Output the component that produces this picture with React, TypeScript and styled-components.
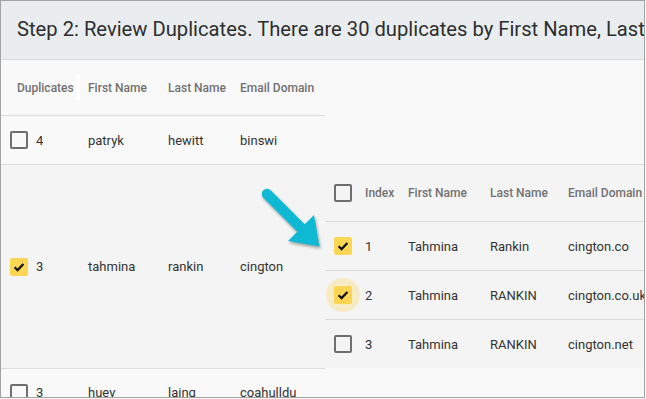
import React from "react";
import styled, { createGlobalStyle } from "styled-components";

const GlobalStyle = createGlobalStyle`
  html, body { margin: 0; padding: 0; background: #ffffff; }
  body { font-family: Roboto, "Liberation Sans", Arial, sans-serif; }
  * { box-sizing: border-box; }
`;

const Frame = styled.div`
  position: relative;
  width: 645px;
  height: 398px;
  border: 1px solid #a3a3a3;
  background: #f9f9f9;
  overflow: hidden;
`;

const TitleBar = styled.div`
  height: 59px;
  display: flex;
  align-items: center;
  padding: 0 0 3px 16px;
  background: #e9edf0;
  border-bottom: 1px solid #d9dcdf;
  font-size: 20.2px;
  color: #2e2e2e;
  white-space: nowrap;
  overflow: hidden;
`;

const Body = styled.div`
  display: flex;
  flex-direction: column;
`;

const OuterGrid = styled.div<{ $border?: "top" | "bottom" | "none" }>`
  width: 324px;
  display: grid;
  grid-template-columns: 79px 80px 72px 93px;
  ${(p) => (p.$border === "bottom" ? "border-bottom: 1px solid #dcdcdc;" : "")}
  ${(p) => (p.$border === "top" ? "border-top: 1px solid #dcdcdc;" : "")}
`;

const HeadRow = styled(OuterGrid)`
  height: 56px;
`;

const DataRow = styled(OuterGrid)`
  height: 48px;
`;

const HeadCell = styled.div<{ $pad?: number; $handle?: boolean }>`
  position: relative;
  display: flex;
  align-items: center;
  padding-left: ${(p) => p.$pad ?? 8}px;
  font-size: 12px;
  font-weight: 500;
  color: #717171;
  white-space: nowrap;
  ${(p) =>
    p.$handle
      ? `&::after {
          content: "";
          position: absolute;
          right: 0;
          top: 15px;
          width: 4px;
          height: 25px;
          background: #ffffff;
        }`
      : ""}
`;

const Cell = styled.div<{ $pad?: number; $gap?: number }>`
  display: flex;
  align-items: center;
  gap: ${(p) => p.$gap ?? 0}px;
  padding-left: ${(p) => p.$pad ?? 8}px;
  font-size: 13px;
  color: #333333;
  white-space: nowrap;
`;

const ExpandedRow = styled.div`
  display: flex;
  border-top: 1px solid #dcdcdc;
`;

const ExpandedLeft = styled(OuterGrid)`
  background: #f4f4f4;
`;

const Nested = styled.div`
  flex: 1;
  background: #f4f4f4;
  display: flex;
  flex-direction: column;
`;

const NestedGrid = styled.div<{ $h: number; $last?: boolean }>`
  display: grid;
  grid-template-columns: 32px 43px 82px 78px 1fr;
  height: ${(p) => p.$h}px;
  border-bottom: ${(p) => (p.$last ? "none" : "1px solid #dcdcdc")};
`;

const Box = styled.span<{ $checked?: boolean; $halo?: boolean }>`
  position: relative;
  flex: none;
  width: 18px;
  height: 18px;
  border-radius: 2px;
  display: inline-flex;
  align-items: center;
  justify-content: center;
  border: ${(p) => (p.$checked ? "none" : "2px solid #6e6e6e")};
  background: ${(p) => (p.$checked ? "#fdd653" : "transparent")};
  ${(p) =>
    p.$halo
      ? `&::before {
          content: "";
          position: absolute;
          left: -8px;
          top: -8px;
          width: 34px;
          height: 34px;
          border-radius: 50%;
          background: rgba(253, 214, 83, 0.3);
        }`
      : ""}
  svg { position: relative; }
`;

const ArrowLayer = styled.svg`
  position: absolute;
  left: 249px;
  top: 179px;
  overflow: visible;
  pointer-events: none;
  filter: drop-shadow(1px 2px 1.5px rgba(0, 0, 0, 0.35));
`;

const Checkbox: React.FC<{ checked?: boolean; halo?: boolean }> = ({ checked, halo }) => (
  <Box $checked={checked} $halo={halo}>
    {checked && (
      <svg width="18" height="18" viewBox="0 0 18 18">
        <path d="M4.6 9.2 L7.6 12.1 L13.4 6" fill="none" stroke="#111" strokeWidth="2.2" />
      </svg>
    )}
  </Box>
);

const nestedRows = [
  { idx: 1, first: "Tahmina", last: "Rankin", email: "cington.co", checked: true, halo: false },
  { idx: 2, first: "Tahmina", last: "RANKIN", email: "cington.co.uk", checked: true, halo: true },
  { idx: 3, first: "Tahmina", last: "RANKIN", email: "cington.net", checked: false, halo: false },
];

export default function App() {
  return (
    <>
      <GlobalStyle />
      <Frame>
        <TitleBar>Step 2: Review Duplicates. There are 30 duplicates by First Name, Last Name, Email Domain</TitleBar>
        <Body>
          <HeadRow $border="bottom">
            <HeadCell $pad={16} $handle>Duplicates</HeadCell>
            <HeadCell>First Name</HeadCell>
            <HeadCell>Last Name</HeadCell>
            <HeadCell>Email Domain</HeadCell>
          </HeadRow>
          <DataRow>
            <Cell $pad={9} $gap={8}>
              <Checkbox />4
            </Cell>
            <Cell>patryk</Cell>
            <Cell>hewitt</Cell>
            <Cell>binswi</Cell>
          </DataRow>
          <ExpandedRow>
            <ExpandedLeft>
              <Cell $pad={9} $gap={8}>
                <Checkbox checked />3
              </Cell>
              <Cell>tahmina</Cell>
              <Cell>rankin</Cell>
              <Cell>cington</Cell>
            </ExpandedLeft>
            <Nested>
              <NestedGrid $h={57}>
                <Cell $pad={9}>
                  <Checkbox />
                </Cell>
                <HeadCell>Index</HeadCell>
                <HeadCell>First Name</HeadCell>
                <HeadCell>Last Name</HeadCell>
                <HeadCell>Email Domain</HeadCell>
              </NestedGrid>
              {nestedRows.map((r, i) => (
                <NestedGrid key={r.idx} $h={i === nestedRows.length - 1 ? 48 : 49} $last={i === nestedRows.length - 1}>
                  <Cell $pad={9}>
                    <Checkbox checked={r.checked} halo={r.halo} />
                  </Cell>
                  <Cell>{r.idx}</Cell>
                  <Cell>{r.first}</Cell>
                  <Cell>{r.last}</Cell>
                  <Cell>{r.email}</Cell>
                </NestedGrid>
              ))}
            </Nested>
          </ExpandedRow>
          <DataRow $border="top">
            <Cell $pad={9} $gap={8}>
              <Checkbox />3
            </Cell>
            <Cell>huey</Cell>
            <Cell>laing</Cell>
            <Cell>coahulldu</Cell>
          </DataRow>
        </Body>
        <ArrowLayer width="80" height="80" viewBox="0 0 80 80">
          <line x1="17" y1="14" x2="52" y2="49" stroke="#10b9d3" strokeWidth="10.5" strokeLinecap="round" />
          <polygon points="38,61 64,35 69.5,66.5" fill="#10b9d3" />
        </ArrowLayer>
      </Frame>
    </>
  );
}
